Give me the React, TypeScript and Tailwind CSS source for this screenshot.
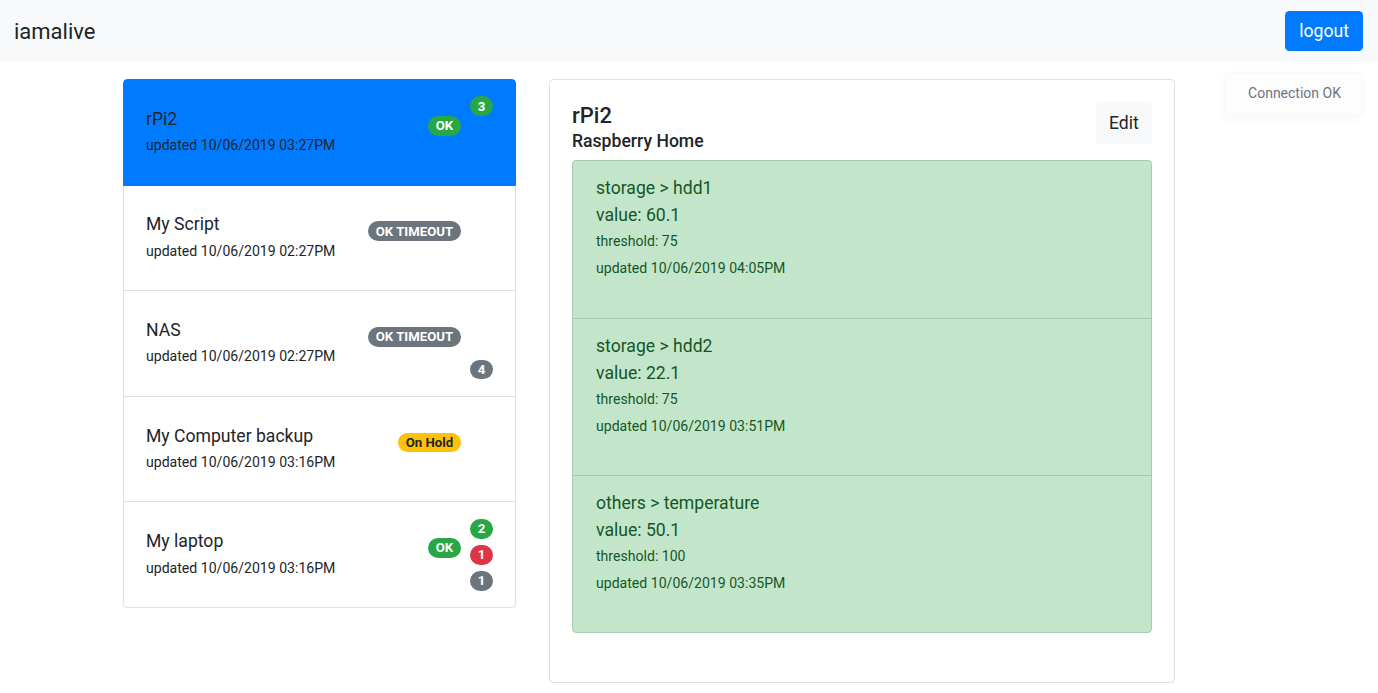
import React from "react";

type Status = { text: string; cls: string };
type Item = {
  title: string;
  updated: string;
  status: Status;
  counts: (number | null)[];
  active?: boolean;
};

const green = "bg-[#28a745] text-white";
const gray = "bg-[#6c757d] text-white";
const red = "bg-[#dc3545] text-white";
const yellow = "bg-[#ffc107] text-[#212529]";

const items: Item[] = [
  { title: "rPi2", updated: "updated 10/06/2019 03:27PM", status: { text: "OK", cls: green }, counts: [3, null, null], active: true },
  { title: "My Script", updated: "updated 10/06/2019 02:27PM", status: { text: "OK TIMEOUT", cls: gray }, counts: [null, null, null] },
  { title: "NAS", updated: "updated 10/06/2019 02:27PM", status: { text: "OK TIMEOUT", cls: gray }, counts: [null, null, 4] },
  { title: "My Computer backup", updated: "updated 10/06/2019 03:16PM", status: { text: "On Hold", cls: yellow }, counts: [null, null, null] },
  { title: "My laptop", updated: "updated 10/06/2019 03:16PM", status: { text: "OK", cls: green }, counts: [2, 1, 1] },
];

const countCls = [green, red, gray];

const metrics = [
  { name: "storage > hdd1", value: "value: 60.1", threshold: "threshold: 75", updated: "updated 10/06/2019 04:05PM" },
  { name: "storage > hdd2", value: "value: 22.1", threshold: "threshold: 75", updated: "updated 10/06/2019 03:51PM" },
  { name: "others > temperature", value: "value: 50.1", threshold: "threshold: 100", updated: "updated 10/06/2019 03:35PM" },
];

function Badge({ text, cls }: { text: string; cls: string }) {
  return (
    <span className={`inline-block rounded-full px-[7.9px] py-[3.3px] text-[13.2px] font-bold leading-none whitespace-nowrap ${cls}`}>
      {text}
    </span>
  );
}

export default function App() {
  return (
    <div className="relative min-h-[693px] bg-white font-[Roboto,Arial,sans-serif] text-[17.6px] text-[#212529]">
      <header className="flex h-[62px] items-center justify-between bg-[#f8f9fa] pl-[14px] pr-[15px]">
        <span className="text-[22px] leading-[33px]">iamalive</span>
        <button className="h-[40px] rounded-[4.4px] bg-[#007bff] px-[14px] text-[17.6px] leading-[26px] text-white">
          logout
        </button>
      </header>

      <div className="flex items-start gap-[33px] pl-[123px] pt-[17px]">
        <div className="w-[393px]">
          {items.map((it, i) => (
            <div
              key={i}
              className={`flex items-center border-x border-b px-[22px] py-[13.3px] ${i === 0 ? "rounded-t-[4.4px] border-t" : ""} ${i === items.length - 1 ? "rounded-b-[4.4px]" : ""} ${it.active ? "border-[#007bff] bg-[#007bff]" : "border-[rgba(0,0,0,0.125)] bg-white"}`}
            >
              <div className="flex-1">
                <div className="leading-[26.4px]">{it.title}</div>
                <div className="text-[14.08px] leading-[26.4px]">{it.updated}</div>
              </div>
              <div className="mb-[16px]">
                <Badge text={it.status.text} cls={it.status.cls} />
              </div>
              <div className="ml-[9px] flex w-[23px] flex-col">
                {it.counts.map((c, j) => (
                  <div key={j} className="flex h-[26px] items-center justify-center">
                    {c !== null && <Badge text={String(c)} cls={countCls[j]} />}
                  </div>
                ))}
              </div>
            </div>
          ))}
        </div>

        <div className="w-[626px] rounded-[4.4px] border border-[rgba(0,0,0,0.125)] px-[22px] pb-[49px] pt-[22px]">
          <div className="flex items-start justify-between">
            <div className="pt-[1px]">
              <div className="mb-[2px] text-[22px] font-medium leading-[26.4px]">rPi2</div>
              <div className="text-[17.6px] font-medium leading-[21px]">Raspberry Home</div>
            </div>
            <button className="h-[42px] rounded-[4.4px] bg-[#f8f9fa] px-[13.2px] text-[17.6px] leading-[26.4px] text-[#212529]">
              Edit
            </button>
          </div>
          <div className="mt-[8px] overflow-hidden rounded-[4.4px] border border-[rgba(0,0,0,0.125)] bg-[#c3e6cb] text-[#155724]">
            {metrics.map((m, i) => (
              <div
                key={i}
                className={`h-[157px] px-[23px] pt-[14px] leading-[26.4px] ${i > 0 ? "border-t border-[rgba(0,0,0,0.125)]" : ""}`}
              >
                <div>{m.name}</div>
                <div>{m.value}</div>
                <div className="text-[14.08px]">{m.threshold}</div>
                <div className="text-[14.08px]">{m.updated}</div>
              </div>
            ))}
          </div>
        </div>
      </div>

      <div className="absolute right-[15px] top-[72px] flex h-[43px] w-[139px] items-center justify-center rounded-[4px] border border-[rgba(0,0,0,0.02)] bg-[#fdfdfd] pl-[2px] text-[14px] text-[#6c757d] shadow-[0_0.25rem_0.75rem_rgba(0,0,0,0.03)]">
        Connection OK
      </div>
    </div>
  );
}
